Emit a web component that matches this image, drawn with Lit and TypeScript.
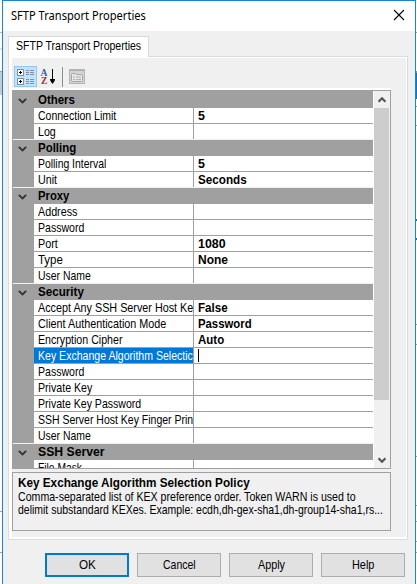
import { html, svg, css, LitElement } from 'lit';
import { customElement, property } from 'lit/decorators.js';
import { classMap } from 'lit/directives/class-map.js';

interface Row {
  name: string;
  // width the label takes up in the name column
  width: number;
  value?: string;
  valueWidth?: number;
  selected?: boolean;
}

interface Category {
  name: string;
  width: number;
  rows: Row[];
}

const categories: Category[] = [
  {
    name: 'Others',
    width: 37,
    rows: [
      { name: 'Connection Limit', width: 78, value: '5', valueWidth: 7 },
      { name: 'Log', width: 18 },
    ],
  },
  {
    name: 'Polling',
    width: 38,
    rows: [
      { name: 'Polling Interval', width: 68, value: '5', valueWidth: 7 },
      { name: 'Unit', width: 19, value: 'Seconds', valueWidth: 49 },
    ],
  },
  {
    name: 'Proxy',
    width: 31,
    rows: [
      { name: 'Address', width: 39 },
      { name: 'Password', width: 46 },
      { name: 'Port', width: 20, value: '1080', valueWidth: 28 },
      { name: 'Type', width: 25, value: 'None', valueWidth: 30 },
      { name: 'User Name', width: 53 },
    ],
  },
  {
    name: 'Security',
    width: 46,
    rows: [
      { name: 'Accept Any SSH Server Host Ke', width: 155, value: 'False', valueWidth: 30 },
      { name: 'Client Authentication Mode', width: 128, value: 'Password', valueWidth: 54 },
      { name: 'Encryption Cipher', width: 84, value: 'Auto', valueWidth: 26 },
      { name: 'Key Exchange Algorithm Selectic', width: 155, selected: true },
      { name: 'Password', width: 46 },
      { name: 'Private Key', width: 54 },
      { name: 'Private Key Password', width: 103 },
      { name: 'SSH Server Host Key Finger Prin', width: 155 },
      { name: 'User Name', width: 53 },
    ],
  },
  {
    name: 'SSH Server',
    width: 67,
    rows: [{ name: 'File Mask', width: 44 }],
  },
];

/**
 * A single line of text squeezed to a fixed width
 */
@customElement('fit-text')
export class FitTextElement extends LitElement {
  static styles = css`
    :host {
      display: block;
      white-space: pre;
    }

    .text {
      display: inline-block;
      transform-origin: 0 0;
    }
  `;

  @property()
  text = '';

  @property({ type: Number })
  width = 0;

  updated() {
    const span = this.renderRoot.querySelector('.text') as HTMLElement;
    this.style.width = `${this.width}px`;
    span.style.transform = `scaleX(${this.width / span.offsetWidth})`;
  }

  render() {
    return html`<span class="text">${this.text}</span>`;
  }
}

@customElement('property-grid')
export class PropertyGridElement extends LitElement {
  static styles = css`
    :host {
      display: flex;
      box-sizing: border-box;
      height: 379px;
      border: 1px solid #a0a0a0;
      background: #fff;
      overflow: hidden;
    }

    .rows {
      flex: 1;
      padding-top: 1px;
      background: #a0a0a0;
      border-right: 1px solid #fff;
      overflow: hidden;
    }

    .category {
      display: flex;
      align-items: center;
      box-sizing: border-box;
      height: 16px;
      padding-top: 1px;
      font-weight: bold;
    }

    .chevron {
      width: 9px;
      height: 6px;
      margin: 0 11px 0 5px;
    }

    .row {
      display: grid;
      grid-template-columns: 159px 1fr;
      column-gap: 1px;
      height: 15px;
      margin-left: 21px;
      padding-bottom: 1px;
    }

    .row.last {
      padding-bottom: 0;
    }

    .rule {
      height: 1px;
      background: #f0f0f0;
    }

    .name,
    .value {
      box-sizing: border-box;
      height: 15px;
      background: #fff;
      padding: 1px 0 0 4px;
      overflow: hidden;
    }

    .value {
      font-weight: bold;
    }

    .selected .name {
      background: #0078d7;
      color: #fff;
    }

    .caret {
      width: 1px;
      height: 13px;
      background: #000;
    }

    .scrollbar {
      display: flex;
      flex-direction: column;
      width: 15px;
      border-right: 1px solid #f0f0f0;
      background: #f0f0f0;
    }

    .arrow {
      height: 17px;
      display: flex;
      align-items: center;
      justify-content: center;
    }

    .thumb {
      height: 292px;
      background: #cdcdcd;
    }

    .arrow.down {
      margin-top: auto;
    }
  `;

  renderRow(row: Row, last: boolean) {
    return html`
      <div class=${classMap({ row: true, last, selected: !!row.selected })}>
        <div class="name"><fit-text .text=${row.name} .width=${row.width}></fit-text></div>
        <div class="value">
          ${row.value
            ? html`<fit-text .text=${row.value} .width=${row.valueWidth ?? 0}></fit-text>`
            : ''}
          ${row.selected ? html`<div class="caret"></div>` : ''}
        </div>
      </div>
      ${last ? html`<div class="rule"></div>` : ''}
    `;
  }

  render() {
    return html`
      <div class="rows">
        ${categories.map(
          (category) => html`
            <div class="category">
              <svg class="chevron" viewBox="0 0 9 6">
                <path d="M0.8 0.8L4.5 4.5L8.2 0.8" fill="none" stroke="#333" stroke-width="1.8" />
              </svg>
              <fit-text .text=${category.name} .width=${category.width}></fit-text>
            </div>
            ${category.rows.map((row, i) => this.renderRow(row, i === category.rows.length - 1))}
          `
        )}
      </div>
      <div class="scrollbar">
        <div class="arrow">
          <svg width="8" height="6" viewBox="0 0 8 6">
            <path d="M0.5 4.8L4 1.3L7.5 4.8" fill="none" stroke="#555" stroke-width="2.2" />
          </svg>
        </div>
        <div class="thumb"></div>
        <div class="arrow down">
          <svg width="8" height="6" viewBox="0 0 8 6">
            <path d="M0.5 1.2L4 4.7L7.5 1.2" fill="none" stroke="#555" stroke-width="2.2" />
          </svg>
        </div>
      </div>
    `;
  }
}

@customElement('app-root')
export class AppRootElement extends LitElement {
  static styles = css`
    :host {
      display: flex;
      box-sizing: border-box;
      width: 417px;
      height: 584px;
      overflow: hidden;
      background: #fff;
      color: #000;
      font: 12.4px/15px 'Liberation Sans', Arial, sans-serif;
    }

    .edge {
      width: 2px;
      flex: none;
    }

    .edge.right {
      width: 1px;
    }

    .edge svg {
      display: block;
    }

    .dialog {
      box-sizing: border-box;
      width: 414px;
      display: flex;
      flex-direction: column;
      border: 1px solid #1883d7;
      border-bottom: none;
      background: #f0f0f0;
    }

    .titlebar {
      display: flex;
      justify-content: space-between;
      height: 30px;
      padding: 0 10px 0 8px;
      background: #fff;
      font: 12px/30px 'Noto Sans', sans-serif;
    }

    .close {
      margin-top: 8px;
    }

    .tab {
      box-sizing: border-box;
      position: relative;
      width: 141px;
      height: 21px;
      margin: 5px 0 -1px 5px;
      padding: 2px 0 0 7px;
      border: 1px solid #d9d9d9;
      border-bottom: none;
      background: #fff;
    }

    .page {
      box-sizing: border-box;
      width: 400px;
      height: 484px;
      margin-left: 5px;
      border: 1px solid #dcdcdc;
      background: #fff;
      padding: 1px 1px 2px 3px;
    }

    .panel {
      display: flex;
      flex-direction: column;
      height: 100%;
      background: #f0f0f0;
      padding-right: 15px;
    }

    .toolbar {
      box-sizing: border-box;
      display: flex;
      height: 32px;
      padding: 8px 0 0 2px;
      border-bottom: 2px solid #fff;
    }

    .toggle {
      box-sizing: border-box;
      width: 23px;
      height: 21px;
      border: 1px solid #90c8f6;
      background: #c4e1f7;
    }

    .help {
      box-sizing: border-box;
      height: 59px;
      margin-top: 3px;
      border: 1px solid #a0a0a0;
      padding: 2px 0 0 5px;
      line-height: 13px;
    }

    .heading {
      font-weight: bold;
      line-height: 16px;
    }

    .buttons {
      display: flex;
      gap: 8px;
      margin: 13px 0 0 42px;
    }

    .button {
      box-sizing: border-box;
      display: flex;
      justify-content: center;
      width: 84px;
      height: 24px;
      border: 1px solid #adadad;
      background: #e1e1e1;
      line-height: 22px;
    }

    .button.primary {
      border: 2px solid #0078d7;
      line-height: 20px;
    }
  `;

  renderEdge(marks: [number, number, string][], width: number) {
    return svg`<svg width=${width} height="584">
      ${marks.map(([y, h, fill]) => svg`<rect x="0" y=${y} width=${width} height=${h} fill=${fill} />`)}
    </svg>`;
  }

  renderToolbar() {
    return html`
      <div class="toolbar">
        <div class="toggle">
          <svg width="21" height="19" viewBox="0 0 21 19" shape-rendering="crispEdges">
            ${[2, 11].map(
              (y) => svg`
                <rect x="2.5" y=${y + 0.5} width="6" height="6" rx="1" fill="#fff" stroke="#7c92b4" />
                <path d="M4 ${y + 3.5}h3M5.5 ${y + 2}v3" stroke="#000" />
                <path d="M11 ${y + 1.5}h3M11 ${y + 3.5}h3M11 ${y + 5.5}h3" stroke="#7d8fa9" />
                <path d="M15 ${y + 1.5}h4M15 ${y + 3.5}h4M15 ${y + 5.5}h4" stroke="#7d8fa9" />
              `
            )}
          </svg>
        </div>
        <svg width="60" height="22" viewBox="0 0 60 22">
          <text x="3.5" y="9.5" font-family="Liberation Serif" font-weight="bold" font-size="9.5" fill="#2a5ca8">A</text>
          <text x="4" y="18" font-family="Liberation Serif" font-weight="bold" font-size="9.5" fill="#a52a30">Z</text>
          <path d="M15.5 3v11" stroke="#000" />
          <path d="M13 13h5v1l-2 3.5h-1l-2 -3.5z" fill="#000" />
          <path d="M25.5 1v20" stroke="#8d8d8d" />
          <rect x="32.5" y="3.5" width="15" height="14" fill="#d4d4d4" stroke="#b5b5b5" />
          <path d="M32 4.5h16" stroke="#b0b0b0" />
          <path d="M34.5 8.5q0 -1 1 -1h3l1 1h5q1 0 1 1v5q0 1 -1 1h-9q-1 0 -1 -1z" fill="#e6e6e6" stroke="#a5a5a5" />
          <path d="M36 11h2M39 11h5M36 13.5h2M39 13.5h5" stroke="#b0b0b0" />
        </svg>
      </div>
    `;
  }

  render() {
    return html`
      <div class="edge">
        ${this.renderEdge([[32, 1, '#a9b7c9'], [48, 2, '#cde6f7'], [71, 1, '#8fa0b3'], [72, 23, '#c3cdd6'], [511, 1, '#a0a0a0'], [552, 1, '#a0a0a0']], 2)}
      </div>
      <div class="dialog">
        <div class="titlebar">
          <fit-text .text=${'SFTP Transport Properties'} .width=${135}></fit-text>
          <svg class="close" width="12" height="12" viewBox="0 0 12 12">
            <path d="M1 1L11 11M11 1L1 11" stroke="#000" stroke-width="1.1" />
          </svg>
        </div>
        <div class="tab">
          <fit-text .text=${'SFTP Transport Properties'} .width=${125}></fit-text>
        </div>
        <div class="page">
          <div class="panel">
            ${this.renderToolbar()}
            <property-grid></property-grid>
            <div class="help">
              <fit-text class="heading" .text=${'Key Exchange Algorithm Selection Policy'} .width=${232}></fit-text>
              <fit-text .text=${'Comma-separated list of KEX preference order. Token WARN is used to'} .width=${338}></fit-text>
              <fit-text .text=${'delimit substandard KEXes. Example: ecdh,dh-gex-sha1,dh-group14-sha1,rs...'} .width=${365}></fit-text>
            </div>
          </div>
        </div>
        <div class="buttons">
          <div class="button primary"><fit-text .text=${'OK'} .width=${17}></fit-text></div>
          <div class="button"><fit-text .text=${'Cancel'} .width=${33}></fit-text></div>
          <div class="button"><fit-text .text=${'Apply'} .width=${27}></fit-text></div>
          <div class="button"><fit-text .text=${'Help'} .width=${22}></fit-text></div>
        </div>
      </div>
      <div class="edge right">
        ${this.renderEdge([[32, 1, '#a0a0a0'], [71, 2, '#8096a8'], [73, 26, '#0078d7'], [106, 1, '#a0a0a0'], [125, 1, '#a0a0a0'], [219, 2, '#0078d7'], [238, 2, '#0078d7'], [324, 1, '#8fa0b3'], [344, 1, '#8fa0b3'], [456, 1, '#a0a0a0'], [505, 1, '#a0a0a0'], [521, 1, '#a0a0a0'], [541, 1, '#a0a0a0'], [552, 1, '#a0a0a0']], 1)}
      </div>
    `;
  }
}

declare global {
  interface HTMLElementTagNameMap {
    'fit-text': FitTextElement;
    'property-grid': PropertyGridElement;
    'app-root': AppRootElement;
  }
}
